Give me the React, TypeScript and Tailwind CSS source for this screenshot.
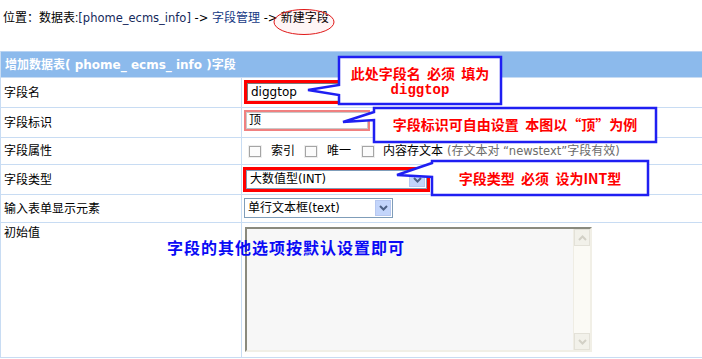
import React from 'react'

const font = { fontFamily: '"Liberation Sans", "Noto Sans CJK SC", sans-serif' }
const latin = { fontFamily: '"DejaVu Sans", "Noto Sans CJK SC", sans-serif' }

function L({ children, size = 'text-[11.5px]' }: { children: React.ReactNode; size?: string }) {
  return (
    <span className={size} style={latin}>
      {children}
    </span>
  )
}

function Box() {
  return (
    <span className="inline-flex w-[14px] h-[13px] shrink-0 bg-[#eeeeee] p-[1px]">
      <span className="flex-1 border border-[#a5a5a5] bg-[#fbfbfb]" />
    </span>
  )
}

function Arrow() {
  return (
    <span className="flex w-[16px] h-full items-center justify-center bg-[#c3d5fb] border border-[#b7c8f0]">
      <svg width="9" height="6" viewBox="0 0 9 6">
        <path d="M1 1 L4.5 4.5 L8 1" fill="none" stroke="#4d6185" strokeWidth="2" />
      </svg>
    </span>
  )
}

function Select({ children, className }: { children: React.ReactNode; className: string }) {
  return (
    <div className={`flex items-center border border-[#7f9db9] bg-white pl-[3px] pr-[1px] py-[1px] ${className}`}>
      <span className="flex-1 text-[12px] text-black leading-[15px]">{children}</span>
      <Arrow />
    </div>
  )
}

export default function App() {
  const row = 'flex border-b border-[#c8dcf3]'
  const label = 'w-[241px] shrink-0 border-r border-[#c8dcf3] px-[3px] flex items-center text-[12px] text-black'
  const cjk = { fontFamily: '"Noto Sans CJK SC", sans-serif' }

  return (
    <div className="relative w-[702px] h-[359px] overflow-hidden bg-white" style={font}>
      {/* breadcrumb */}
      <div className="h-[51px] pt-[10px] pl-[3px] text-[12px] text-black leading-[16px]">
        位置：数据表:<span className="text-[#15295c]"><L>[phome_ecms_info]</L></span><L> -&gt; </L><span className="text-[#163a85]">字段管理</span><L> -&gt;</L> 新建字段
      </div>

      {/* table */}
      <div className="w-[720px] border-l border-[#c8dcf3]">
        <div className="h-[27px] flex items-center border-t border-b border-t-[#b8d3f3] border-b-[#c8dcf3] bg-[#8cbaec] pl-[4px] text-[12px] font-bold text-white">
          增加数据表<L size="text-[12px]">( phome_ ecms_ info )</L>字段
        </div>

        <div className={`${row} h-[30px]`}>
          <div className={label}>字段名</div>
          <div className="flex-1 pl-[2px] pt-[2px]">
            <div className="w-[120px] h-[24px] border-[3px] border-[#ff0000]">
              <div className="h-full border border-t-[#7a7a7a] border-l-[#7a7a7a] border-r-[#dcdcdc] border-b-[#dcdcdc] bg-white pl-[3px] text-[12px] leading-[16px]">
                <span className="text-[12px]" style={latin}>diggtop</span>
              </div>
            </div>
          </div>
        </div>

        <div className={`${row} h-[30px]`}>
          <div className={label}>字段标识</div>
          <div className="flex-1 pl-[2px] pt-[2px]">
            <div className="w-[126px] h-[21px] border-2 border-[#f08080]">
              <div className="h-full border border-[#c9c9c9] bg-white pl-[2px] text-[12px] leading-[15px]">顶</div>
            </div>
          </div>
        </div>

        <div className={`${row} h-[27px]`}>
          <div className={label}>字段属性</div>
          <div className="flex-1 flex items-center pl-[6px] text-[12px] text-black">
            <Box />
            <span className="ml-[9px]">索引</span>
            <span className="ml-[9px] flex"><Box /></span>
            <span className="ml-[9px]">唯一</span>
            <span className="ml-[10px] flex"><Box /></span>
            <span className="ml-[8px]">内容存文本</span>
            <span className="ml-[4px] text-[#6b6b6b]"><L>(</L>存文本对 <L>“newstext”</L>字段有效<L>)</L></span>
          </div>
        </div>

        <div className={`${row} h-[30px]`}>
          <div className={label}>字段类型</div>
          <div className="flex-1 pl-[1px] pt-[2px]">
            <div className="w-[187px] h-[25px] border-[3px] border-[#ff0000]">
              <Select className="h-full">大数值型<L>(INT)</L></Select>
            </div>
          </div>
        </div>

        <div className={`${row} h-[28px]`}>
          <div className={label}>输入表单显示元素</div>
          <div className="flex-1 pl-[2px] pt-[3px]">
            <Select className="w-[149px] h-[20px]">单行文本框<L>(text)</L></Select>
          </div>
        </div>

        <div className={`${row} h-[135px]`}>
          <div className="w-[241px] shrink-0 border-r border-[#c8dcf3] px-[3px] pt-[1px] text-[12px] text-black">初始值</div>
          <div className="flex-1 pl-[3px] pt-[4px]">
            <div className="flex w-[347px] h-[125px] border-2 border-t-[#8a8a7e] border-l-[#8a8a7e] border-r-[#f1efe6] border-b-[#f1efe6] bg-[#f7f7f7]">
              <div className="flex-1" />
              <div className="w-[17px] flex flex-col justify-between bg-[#fbfaf5] border-l border-[#efede4]">
                <span className="flex h-[17px] items-center justify-center bg-[#f2f1ea] border border-[#e3e1d8]">
                  <svg width="9" height="6" viewBox="0 0 9 6"><path d="M1 5 L4.5 1.5 L8 5" fill="none" stroke="#d2d0c6" strokeWidth="2" /></svg>
                </span>
                <span className="flex h-[17px] items-center justify-center bg-[#f2f1ea] border border-[#e3e1d8]">
                  <svg width="9" height="6" viewBox="0 0 9 6"><path d="M1 1 L4.5 4.5 L8 1" fill="none" stroke="#d2d0c6" strokeWidth="2" /></svg>
                </span>
              </div>
            </div>
          </div>
        </div>
      </div>

      {/* annotations */}
      <svg className="absolute left-0 top-0 pointer-events-none" width="702" height="359">
        <ellipse cx="304" cy="22" rx="30" ry="12.5" fill="rgba(255,0,0,0.04)" stroke="#e01818" strokeWidth="1" />
        <path d="M339 57 H501 V104 H339 V95 L308 90 L339 85 Z" fill="white" stroke="#1f1ff2" strokeWidth="2.5" />
        <path d="M374 108 H656 V142 H374 V120 L343 122 L374 112 Z" fill="white" stroke="#1f1ff2" strokeWidth="2.5" />
        <path d="M432 161 H648 V195 H432 V177 L397 175 L432 163 Z" fill="white" stroke="#1f1ff2" strokeWidth="2.5" />
      </svg>

      <div className="absolute left-[341px] top-[64px] w-[158px] text-center text-[14px] font-bold text-[#ff0000] leading-[19px]" style={cjk}>
        此处字段名&nbsp; 必须&nbsp; 填为
        <div className="leading-[15px]" style={{ fontFamily: '"Liberation Mono", monospace' }}>diggtop</div>
      </div>
      <div className="absolute left-[376px] top-[115px] w-[278px] text-center text-[14px] font-bold text-[#ff0000] leading-[19px]" style={cjk}>
        字段标识可自由设置&nbsp; 本图以“顶”为例
      </div>
      <div className="absolute left-[434px] top-[169px] w-[212px] text-center text-[14px] font-bold text-[#ff0000] leading-[19px]" style={cjk}>
        字段类型&nbsp; 必须&nbsp; 设为INT型
      </div>
      <div className="absolute left-[167px] top-[236px] text-[16px] font-bold text-[#0a0af5] leading-[22px] tracking-[1px]" style={cjk}>
        字段的其他选项按默认设置即可
      </div>
    </div>
  )
}
